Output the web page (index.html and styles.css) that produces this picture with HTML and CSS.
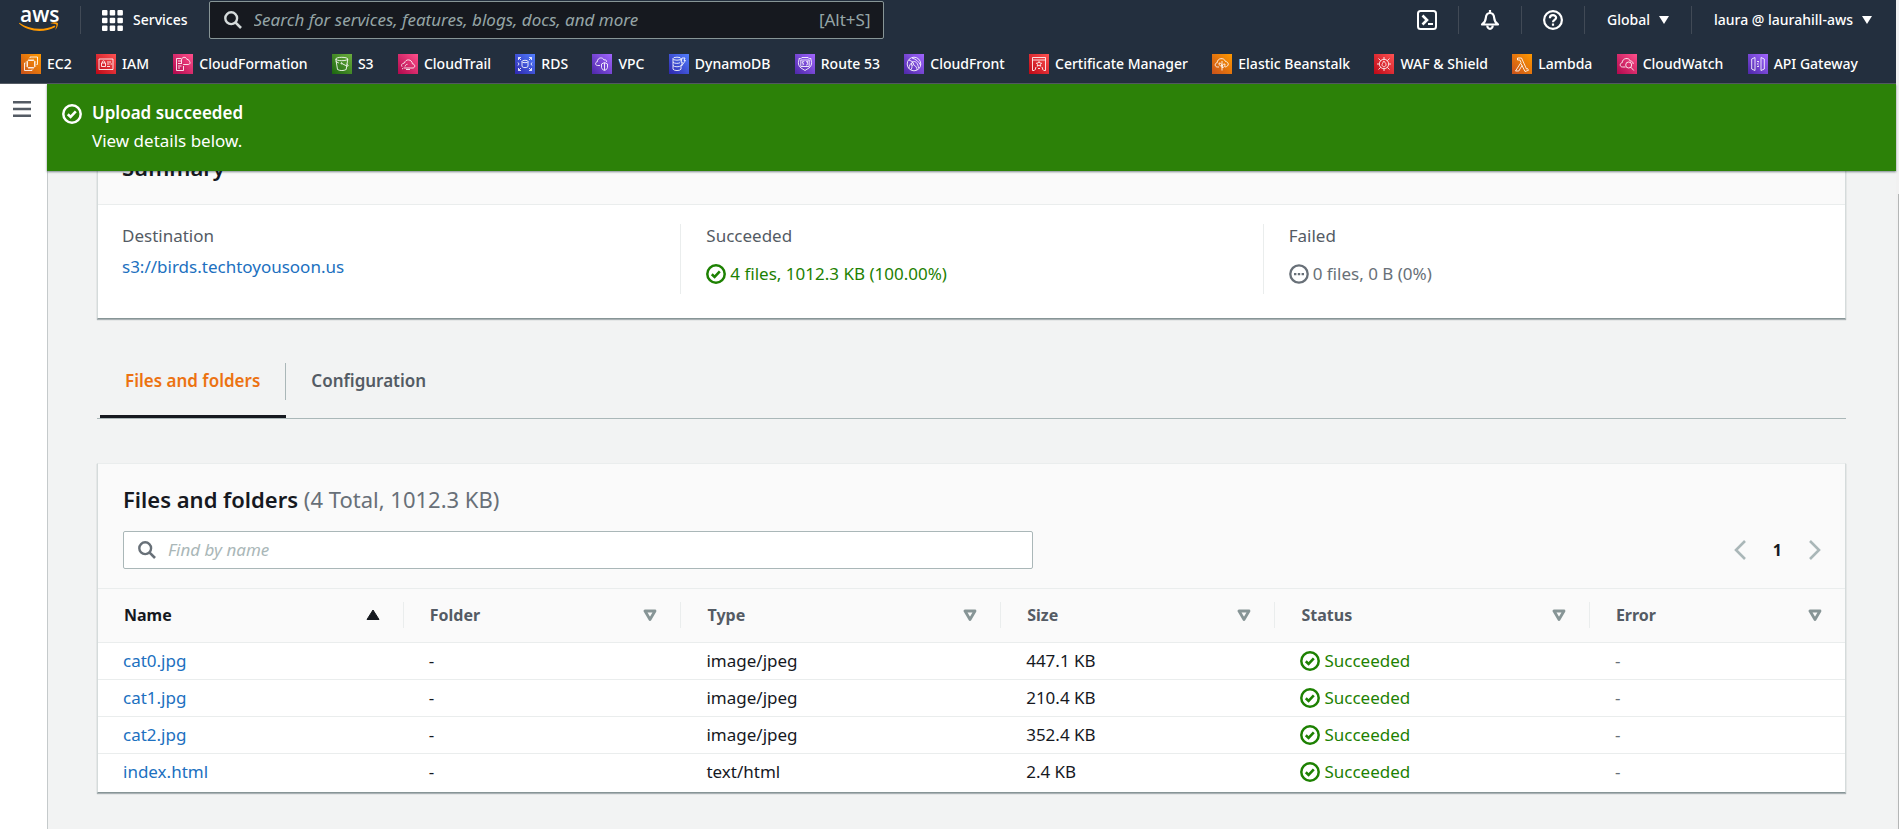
FILE: index.html
```
<!DOCTYPE html>
<html lang="en">
<head>
<meta charset="utf-8">
<title>Upload status - S3</title>
<link rel="stylesheet" href="styles.css">
</head>
<body>
<svg class="defs" aria-hidden="true">
  <symbol id="i-check" viewBox="0 0 20 20"><circle cx="10" cy="10" r="8.700" fill="none" stroke="currentColor" stroke-width="2.500"/><path d="M5.800 10.200l2.800 2.700 5.200-5.500" fill="none" stroke="currentColor" stroke-width="2.600"/></symbol>
  <symbol id="i-dots" viewBox="0 0 20 20"><circle cx="10" cy="10" r="8.700" fill="none" stroke="currentColor" stroke-width="2.300"/><path d="M5 9h2.400v2.200H5zM8.800 9h2.400v2.200H8.800zM12.600 9H15v2.200h-2.400z" fill="currentColor"/></symbol>
  <symbol id="i-search" viewBox="0 0 18 18"><circle cx="7.200" cy="7.200" r="5.900" fill="none" stroke="currentColor" stroke-width="2.400"/><path d="M11.400 11.400l5.600 5.600" stroke="currentColor" stroke-width="2.600"/></symbol>
  <symbol id="i-sort" viewBox="0 0 14 12"><path d="M2 2h10L7 10.500z" fill="none" stroke="currentColor" stroke-width="2.800" stroke-linejoin="round"/></symbol>
  <symbol id="i-asc" viewBox="0 0 14 12"><path d="M7 1l6 9.500H1z" fill="currentColor" stroke="currentColor" stroke-linejoin="round"/></symbol>
  <symbol id="i-caret" viewBox="0 0 10 8"><path d="M0 0h10L5 8z" fill="currentColor"/></symbol>
</svg>

<div class="window">
<div class="app">
<header class="top">
  <div class="top-row">
    <a class="logo" href="#" aria-label="aws home"><span class="logo-text">aws</span>
      <svg class="smile" viewBox="0 0 40 10" aria-hidden="true"><path d="M.3.8C11 8 25 8.600 35.600 3.500l.8 1.400C25 11.200 9 10 0 1.500z" fill="#f90"/><path d="M31.500 1.500c3-1.600 6-1.200 7.300-.6.500 2-.4 5-2.600 7.100.6-2 1.600-4.400 1.100-5.600-1.400-.7-3.600-.7-5.800-.9z" fill="#f90"/></svg>
    </a>
    <button class="services" type="button">
      <svg width="21" height="21" viewBox="0 0 21 21" aria-hidden="true"><g fill="currentColor"><rect width="5.500" height="5.500" rx="1"/><rect x="7.700" width="5.500" height="5.500" rx="1"/><rect x="15.400" width="5.500" height="5.500" rx="1"/><rect y="7.700" width="5.500" height="5.500" rx="1"/><rect x="7.700" y="7.700" width="5.500" height="5.500" rx="1"/><rect x="15.400" y="7.700" width="5.500" height="5.500" rx="1"/><rect y="15.400" width="5.500" height="5.500" rx="1"/><rect x="7.700" y="15.400" width="5.500" height="5.500" rx="1"/><rect x="15.400" y="15.400" width="5.500" height="5.500" rx="1"/></g></svg>
      Services</button>
    <label class="global-search">
      <svg width="18" height="18" aria-hidden="true"><use href="#i-search"/></svg>
      <input type="search" aria-label="Search AWS" placeholder="Search for services, features, blogs, docs, and more">
      <span>[Alt+S]</span>
    </label>
    <div class="tools">
      <button type="button" aria-label="CloudShell"><svg width="20" height="20" viewBox="0 0 20 20" fill="none" stroke="currentColor" stroke-width="2"><rect x="1" y="1" width="18" height="18" rx="2.500"/><path d="M5.500 5.500L10 10l-4.500 4.500" stroke-width="2.600"/><path d="M11 14h5"/></svg></button>
      <button type="button" aria-label="Notifications"><svg width="20" height="20" viewBox="0 0 20 20" fill="none" stroke="currentColor" stroke-width="2.200"><path d="M2 14.500h16c-2.800-1.800-3.600-3.600-3.800-6.500C14 5 12.500 3 10 3S6 5 5.800 8C5.600 10.900 4.800 12.700 2 14.500z" stroke-linejoin="round"/><path d="M10 0v3M7.300 15.500a2.700 3.300 0 0 0 5.400 0"/></svg></button>
      <button type="button" aria-label="Help"><svg width="20" height="20" viewBox="0 0 20 20" fill="none" stroke="currentColor" stroke-width="2.200"><circle cx="10" cy="10" r="8.900"/><path d="M6.900 8.200C6.900 4 13.100 4.300 13.100 7.800c0 2-3.100 2.200-3.100 4.400M10 13.600v2.200"/></svg></button>
      <button class="menu" type="button">Global <svg width="10" height="8" aria-hidden="true"><use href="#i-caret"/></svg></button>
      <button class="menu" type="button">laura @ laurahill-aws <svg width="10" height="8" aria-hidden="true"><use href="#i-caret"/></svg></button>
    </div>
  </div>
  <nav class="favorites" aria-label="Favorites">
    <a href="#"><svg class="svc orange" viewBox="0 0 20 20"><rect x="6.500" y="6.500" width="7" height="7" rx="1"/><path d="M8 4.800v1.700M10 4.800v1.700M12 4.800v1.700M8 13.500v1.700M10 13.500v1.700M12 13.500v1.700M4.800 8h1.700M4.800 10h1.700M4.800 12h1.700M13.500 8h1.700M13.500 10h1.700M13.500 12h1.700M9 4V3h7.500v7.500h-1M4.500 9h-1v7.500H11v-1"/></svg>EC2</a>
    <a href="#"><svg class="svc red" viewBox="0 0 20 20"><path d="M3 5h14v10.500H3zM5.500 9h4v3.500h-4zM6.300 9V7.500q1.200-1.400 2.400 0V9M11 8h4M11 10h2.500M14.500 10H16M11 12.500h3"/></svg>IAM</a>
    <a href="#"><svg class="svc pink" viewBox="0 0 20 20"><path d="M8 4.500H3.500v12h7V12M5 7h3M5 9.500h4M5 12h3.500M5 14h2M8.500 9V6c0-3.500 5-3.500 5.500-.5 2-.5 2 1.500 2 1.500 1.500.5 1.500 3.500-.8 3.500h-5"/></svg>CloudFormation</a>
    <a href="#"><svg class="svc green" viewBox="0 0 20 20"><ellipse cx="9.800" cy="5" rx="6" ry="1.700"/><path d="M3.800 5l1.700 10.500c2.400 1.400 6.300 1.400 8.700 0L15.800 5M9.800 9.500l5 2.500c2 .6 1.700-.8-.1-2M3.800 7.500l3 1.500"/><circle cx="9.500" cy="9.300" r=".6"/></svg>S3</a>
    <a href="#"><svg class="svc pink" viewBox="0 0 20 20"><path d="M5.500 14H15c2.500-.4 2.300-4-.6-4.200C14 5 7.500 4.500 6.500 9 3.800 9 3 11.500 4 12.700M7 12.500c.5-2 2-2.200 2.500-2.200M4 14.700h1M8 15.500h4"/></svg>CloudTrail</a>
    <a href="#"><svg class="svc blue" viewBox="0 0 20 20"><ellipse cx="10" cy="7.500" rx="3" ry="1.200"/><path d="M7 7.500v5c1 1.500 5 1.500 6 0v-5M3.500 6V3.500H6M3.500 3.500l2.500 2.500M14 3.500h2.500V6M16.500 3.500L14 6M3.500 14v2.500H6M3.500 16.500L6 14M16.500 14v2.500H14M16.500 16.500L14 14M3 8.500l1 1.500-1 1.500M17 8.500L16 10l1 1.500"/></svg>RDS</a>
    <a href="#"><svg class="svc purple" viewBox="0 0 20 20"><path d="M8 11.500H5.500C3 11.500 3 8 5.300 7.800 5.500 3 11 3 12 6c2-.8 2.800 1 2.500 2M9.500 10l3-1.500 3 1.500v3.500c0 1.800-3 3-3 3s-3-1.200-3-3zM12.500 9v7"/></svg>VPC</a>
    <a href="#"><svg class="svc blue" viewBox="0 0 20 20"><ellipse cx="8" cy="4.700" rx="4" ry="1.500"/><path d="M4 4.700v10.500c1 1.800 7 1.800 8 0V12M4 8c1 1.700 5.500 1.700 7 .7M4 11.500c1 1.700 7 1.700 8 0M13 4h3l-1 2.500h1.500L12.500 12l.8-3.800H12zM12 4.700V7"/></svg>DynamoDB</a>
    <a href="#"><svg class="svc purple" viewBox="0 0 20 20"><path d="M4 4.500c1.500.5 2.500 0 3-1h6c.5 1 1.500 1.500 3 1-.3 2 1 3 .5 5.500-.5 4-4 4.500-6.500 6.500C7.500 14.500 4 14 3.500 10 3 7.500 4.300 6.500 4 4.500zM5.800 6h8.400v6.500H5.800zM9.300 7.700h-2v1.500c2-.3 2 2 0 1.800M11 7.700h2l-1 1.300c1.500.3 1.300 2-1 2"/></svg>Route 53</a>
    <a href="#"><svg class="svc purple" viewBox="0 0 20 20"><circle cx="10" cy="10" r="6.800"/><path d="M5 14.500c0-3 1.500-5.500 5-7 2 0 4 2 4.500 6.500M8 4c4 1 7 4 8.500 7M6.500 16c1.500-1 1.500-3 1.500-5M10 11c2 1 3 3 3 5M5 6l4 2"/><circle cx="8.500" cy="10" r="1.200"/></svg>CloudFront</a>
    <a href="#"><svg class="svc red" viewBox="0 0 20 20"><path d="M5.500 16.500h-2v-13h13v13h-2M3.500 6h13M10 7.500l.9 1.500 1.700.2-1.200 1.300.4 1.700-1.800-.8-1.800.8.400-1.700-1.200-1.300L9.100 9zM7 13l-1 3M13 13l1 3M9 14.500h2"/></svg>Certificate Manager</a>
    <a href="#"><svg class="svc orange" viewBox="0 0 20 20"><path d="M7 13H5.500C2.500 13 2.500 9 5.200 8.700 5.200 4 12 3 13.500 7.500c3.500.3 4 5-.5 5.500M10 7v9.500M10 12c-2.500 0-3-1-3-3 2 0 3 1 3 3zM10 13.500c2.500 0 3-1.500 3-3.500-2 0-3 1-3 3.500z"/></svg>Elastic Beanstalk</a>
    <a href="#"><svg class="svc red" viewBox="0 0 20 20"><circle cx="10" cy="10" r="4.700"/><path d="M10 3v2.300M10 14.700V17M3 10h2.300M14.700 10H17M4.500 4.500l2.200 2.200M13.300 13.300l2.200 2.200M15.500 4.500l-2.200 2.200M6.700 13.300l-2.200 2.200M10 7c.5 1.500 2 2 2 3.500 0 3-4 3-4 0 0-1 1-1 1-2s.5-1 1-1.500z"/></svg>WAF &amp; Shield</a>
    <a href="#"><svg class="svc orange" viewBox="0 0 20 20"><path d="M5.500 4h4l5 11 1-.5 1 1.800-3.500 1.200L9 9.500M5.500 4v2H8l1 2.500L3.500 17h3.300L10 11.500"/></svg>Lambda</a>
    <a href="#"><svg class="svc pink" viewBox="0 0 20 20"><path d="M8.500 13H5.500C2.500 13 2.500 9 5.200 8.700 5.200 4 12 3 13.200 7c2 0 3 1.200 3 3"/><circle cx="11.700" cy="11" r="3"/><path d="M13.800 13.200l3 3.300"/></svg>CloudWatch</a>
    <a href="#"><svg class="svc purple" viewBox="0 0 20 20"><path d="M7 3.500L3.700 5v10L7 16.500zM13 3.500L16.300 5v10L13 16.500zM9 7.500h2M9 12.500h2M10.700 8.800L9.300 10l1.400 1.200"/></svg>API Gateway</a>
  </nav>
</header>

<div class="body">
  <aside class="side">
    <button type="button" aria-label="Open navigation"><svg width="18" height="16" viewBox="0 0 18 16"><path d="M0 1.300h18M0 8h18M0 14.700h18" stroke="#545b64" stroke-width="2.400"/></svg></button>
  </aside>
  <main class="main">
    <div class="flash" role="status">
      <svg width="20" height="20" aria-hidden="true"><use href="#i-check"/></svg>
      <div><strong>Upload succeeded</strong><p>View details below.</p></div>
    </div>

    <section class="panel summary">
      <h2 class="panel-head">Summary</h2>
      <dl class="facts">
        <div><dt>Destination</dt><dd><a href="#">s3://birds.techtoyousoon.us</a></dd></div>
        <div><dt>Succeeded</dt><dd class="status ok"><svg width="20" height="20" aria-hidden="true"><use href="#i-check"/></svg>4 files, 1012.3 KB (100.00%)</dd></div>
        <div><dt>Failed</dt><dd class="status none"><svg width="20" height="20" aria-hidden="true"><use href="#i-dots"/></svg>0 files, 0 B (0%)</dd></div>
      </dl>
    </section>

    <div class="tabs" role="tablist">
      <button class="tab active" role="tab" aria-selected="true" type="button"><span>Files and folders</span></button>
      <button class="tab" role="tab" aria-selected="false" type="button"><span>Configuration</span></button>
    </div>

    <section class="panel files">
      <div class="files-head">
        <h2>Files and folders <span>(4 Total, 1012.3 KB)</span></h2>
        <div class="filter-row">
          <label class="filter">
            <svg width="18" height="18" aria-hidden="true"><use href="#i-search"/></svg>
            <input type="search" aria-label="Find by name" placeholder="Find by name">
          </label>
          <div class="pager">
            <button type="button" aria-label="Previous page"><svg width="12" height="20" viewBox="0 0 12 20"><path d="M11 1L2 10l9 9" fill="none" stroke="currentColor" stroke-width="2.600"/></svg></button>
            <button class="page" type="button">1</button>
            <button type="button" aria-label="Next page"><svg width="12" height="20" viewBox="0 0 12 20"><path d="M1 1l9 9-9 9" fill="none" stroke="currentColor" stroke-width="2.600"/></svg></button>
          </div>
        </div>
      </div>
      <table>
        <colgroup><col class="c-name"><col class="c-folder"><col class="c-type"><col class="c-size"><col class="c-status"><col></colgroup>
        <thead><tr>
          <th class="sorted"><div>Name<svg width="14" height="12"><use href="#i-asc"/></svg></div></th>
          <th><div>Folder<svg width="14" height="12"><use href="#i-sort"/></svg></div></th>
          <th><div>Type<svg width="14" height="12"><use href="#i-sort"/></svg></div></th>
          <th><div>Size<svg width="14" height="12"><use href="#i-sort"/></svg></div></th>
          <th><div>Status<svg width="14" height="12"><use href="#i-sort"/></svg></div></th>
          <th><div>Error<svg width="14" height="12"><use href="#i-sort"/></svg></div></th>
        </tr></thead>
        <tbody>
          <tr><td><a href="#">cat0.jpg</a></td><td>-</td><td>image/jpeg</td><td>447.1 KB</td><td><span class="status ok"><svg width="20" height="20" aria-hidden="true"><use href="#i-check"/></svg>Succeeded</span></td><td class="dim">-</td></tr>
          <tr><td><a href="#">cat1.jpg</a></td><td>-</td><td>image/jpeg</td><td>210.4 KB</td><td><span class="status ok"><svg width="20" height="20" aria-hidden="true"><use href="#i-check"/></svg>Succeeded</span></td><td class="dim">-</td></tr>
          <tr><td><a href="#">cat2.jpg</a></td><td>-</td><td>image/jpeg</td><td>352.4 KB</td><td><span class="status ok"><svg width="20" height="20" aria-hidden="true"><use href="#i-check"/></svg>Succeeded</span></td><td class="dim">-</td></tr>
          <tr><td><a href="#">index.html</a></td><td>-</td><td>text/html</td><td>2.4 KB</td><td><span class="status ok"><svg width="20" height="20" aria-hidden="true"><use href="#i-check"/></svg>Succeeded</span></td><td class="dim">-</td></tr>
        </tbody>
      </table>
    </section>
  </main>
</div>
</div>
<div class="scroll-track"><div class="scroll-thumb"></div></div>
</div>
</body>
</html>
```
FILE: styles.css
```
* { box-sizing: border-box; }
body {
  margin: 0;
  background: #f2f3f3;
  color: #16191f;
  font: 17px/24px "Noto Sans", "Open Sans", sans-serif;
}
h2, p, dl, dd { margin: 0; }
a { color: #2070c0; text-decoration: none; }
button { border: 0; padding: 0; background: none; color: inherit; font: inherit; }
input { border: 0; outline: 0; padding: 0; background: none; font: inherit; flex: 1; min-width: 0; }
input::placeholder { color: #aab7b8; font-style: italic; opacity: 1; }
svg { flex: none; }
.defs { position: absolute; width: 0; height: 0; }
.window { display: flex; min-height: 100vh; }
.app { flex: 1; min-width: 0; display: flex; flex-direction: column; }
.scroll-track { width: 3px; padding: 194px 0 0 2px; display: flex; background: #f1f1f1; }
.scroll-thumb { flex: 1; background: #b4b6b6; }

/* Top navigation */
.top { background: #232f3e; color: #fff; border-bottom: 1px solid #545b64; font-size: 14px; font-weight: 500; }
.top-row { display: flex; align-items: center; height: 40px; }
.logo { width: 81px; height: 28px; padding-left: 19px; border-right: 1px solid #414a56; color: #fff; display: flex; flex-direction: column; }
.logo-text { font: 600 21px/16px "Open Sans", sans-serif; padding-left: 1px; }
.smile { width: 40px; height: 10px; }
.services { display: flex; align-items: center; gap: 10px; padding: 0 21px; }
.global-search {
  flex: 0 1 675px; display: flex; align-items: center; gap: 12px; height: 38px;
  padding: 0 12px 0 14px; background: #16191f; border: 1px solid #879596; border-radius: 2px;
  font-size: 17px; font-weight: 400; color: #95a5a6;
}
.global-search input::placeholder { color: #95a5a6; }
.global-search svg { color: #d5dbdb; }
.tools { display: flex; margin-left: auto; padding-right: 2px; }
.tools button { height: 28px; display: flex; align-items: center; gap: 9px; padding: 0 21px; border-left: 1px solid #414a56; }
.tools .menu { padding: 0 22px; }
.tools button:first-child { border-left: 0; }
.favorites { display: flex; justify-content: space-between; align-items: center; height: 43px; padding: 5px 38px 0 21px; }
.favorites a { display: flex; align-items: center; gap: 6px; color: #fff; white-space: nowrap; line-height: 20px; }
.svc { width: 20px; height: 20px; fill: none; stroke: #fff; stroke-width: 1; stroke-opacity: .85; }
.orange { background: linear-gradient(45deg, #c8511b, #f90); }
.red { background: linear-gradient(45deg, #bd0816, #ff5252); }
.pink { background: linear-gradient(45deg, #b0084d, #ff4f8b); }
.green { background: linear-gradient(45deg, #1b660f, #6cae3e); }
.blue { background: linear-gradient(45deg, #2e27ad, #527fff); }
.purple { background: linear-gradient(45deg, #4d27a8, #a166ff); }

/* Page body */
.body { flex: 1; display: flex; }
.side { width: 48px; background: #fff; border-right: 1px solid #c5cacb; }
.side button { display: block; padding: 17px 13px; line-height: 0; }
.main { flex: 1; min-width: 0; position: relative; padding: 42px 50px 37px 49px; }
.flash {
  position: absolute; top: 0; left: -1px; right: 0; display: flex; gap: 10px;
  padding: 15px; background: #2c8108; color: #fff; line-height: 28px;
  box-shadow: 0 1px 2px rgba(0, 28, 36, .5);
}
.flash svg { margin-top: 5px; }
.flash div { padding-bottom: 1px; }
.flash strong { font-weight: 600; }

.panel { background: #fff; border: 1px solid #d5dbdb; border-top-color: #eaeded; border-bottom-color: #879596; box-shadow: 0 1px 1px rgba(0, 28, 36, .3); }
.panel h2 { font-size: 22px; line-height: 28px; font-weight: 600; }
.summary .panel-head { padding: 26px 24px 23px; background: #fafafa; border-bottom: 1px solid #eaeded; }
.facts { display: grid; grid-template-columns: repeat(3, 1fr); padding: 19px 0 24px; }
.facts > div { padding: 0 24px; min-height: 70px; }
.facts > div + div { padding-left: 25px; border-left: 1px solid #eaeded; }
.facts dt { color: #545b64; }
.facts dd { margin-top: 7px; }
.facts dd.status { margin-top: 14px; }
.status { display: flex; align-items: center; gap: 4px; }
.ok { color: #1d8102; }
.none { color: #687078; }

.tabs { display: flex; margin-top: 37px; padding-left: 3px; border-bottom: 1px solid #aab7b8; }
.tab { padding: 7px 0 15px; border-bottom: 3px solid transparent; font-weight: 600; color: #545b64; }
.tab span { display: block; padding: 5px 25px 7px; line-height: 25px; }
.tab.active { color: #ec7211; border-color: #16191f; }
.tab.active span { border-right: 1px solid #aab7b8; }

.files { margin-top: 44px; padding-bottom: 2px; }
.files-head { padding: 21px 24px 19px 25px; background: #fafafa; }
.files-head h2 span { font-weight: 400; color: #687078; }
.filter-row { display: flex; justify-content: space-between; align-items: center; margin-top: 18px; }
.filter { flex: 0 1 910px; display: flex; align-items: center; gap: 12px; height: 38px; padding: 0 14px; background: #fff; border: 1px solid #aab7b8; border-radius: 2px; color: #687078; }
.pager { display: flex; align-items: center; gap: 27px; color: #aab7b8; }
.pager button { display: flex; }
.pager .page { color: #16191f; font-weight: 700; font-size: 16px; }

table { width: 100%; border-collapse: collapse; table-layout: fixed; }
.c-name { width: 17.500%; }
.c-folder { width: 15.900%; }
.c-type { width: 18.300%; }
.c-size { width: 15.700%; }
.c-status { width: 18%; }
th { height: 54px; padding: 0 0 1px; background: #fafafa; border-top: 1px solid #eaeded; color: #545b64; text-align: left; font-size: 16px; }
th div { display: flex; justify-content: space-between; align-items: center; line-height: 26px; padding: 0 23px 0 26px; border-right: 1px solid #eaeded; }
th:last-child div { border-right: 0; }
th svg { color: #879596; }
th.sorted, th.sorted svg { color: #16191f; }
td { padding: 6px 25px; border-top: 1px solid #eaeded; }
.dim { color: #687078; }
```
